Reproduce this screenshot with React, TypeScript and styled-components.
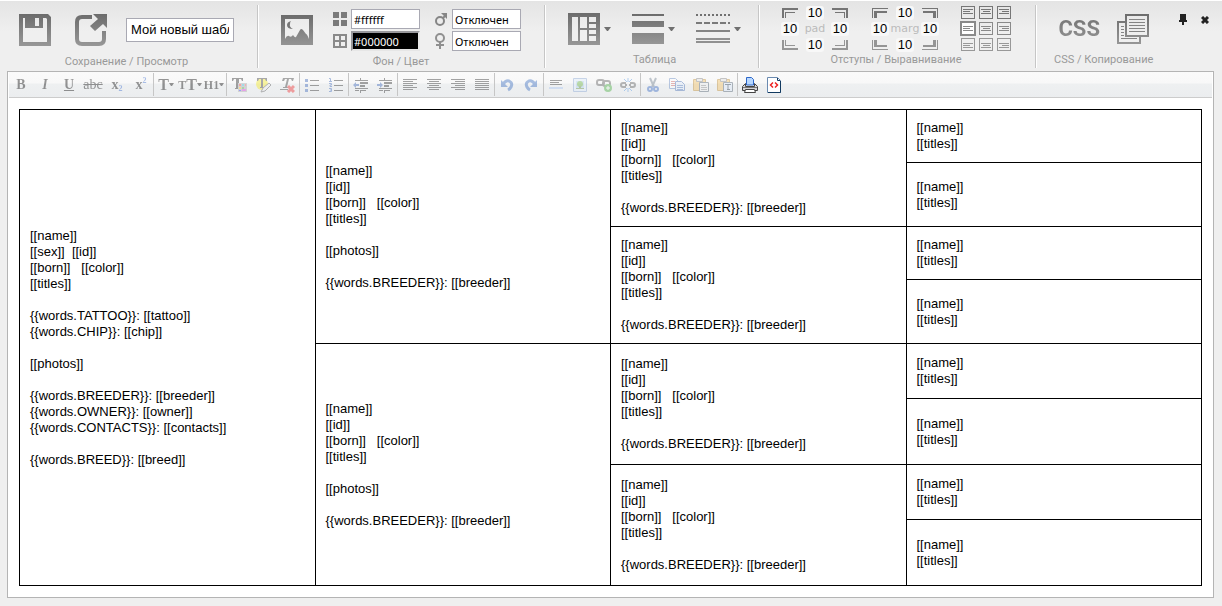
import React from 'react';
import styled, { createGlobalStyle, css } from 'styled-components';

const GlobalStyle = createGlobalStyle`
  * { box-sizing: border-box; }
  body {
    margin: 0;
    background: #efefef;
    font-family: "Liberation Sans", Arial, sans-serif;
    font-size: 13px;
    line-height: 16px;
    color: #000;
  }
  button, input { font: inherit; color: inherit; margin: 0; padding: 0; }
  svg { display: block; flex: none; }
`;

/* ---------- page ---------- */

const Page = styled.main`
  border-top: 1px solid #fff;
  background: linear-gradient(#e4e4e4, #efefef 30px);
  padding: 4px 8px 8px 7px;
`;

const Ribbon = styled.header`
  display: flex;
  align-items: flex-start;
  margin: 0 -8px 3px -7px;
`;

const Group = styled.section<{ $pad: string; $last?: boolean }>`
  display: flex;
  flex-direction: column;
  align-items: center;
  height: 63px;
  padding: ${p => p.$pad};
  ${p =>
    !p.$last &&
    css`
      border-right: 1px solid #c6c6c6;
      box-shadow: 1px 0 #fff;
      margin-right: 1px;
    `}
`;

const Controls = styled.div<{ $gap: number }>`
  display: flex;
  align-items: center;
  gap: ${p => p.$gap}px;
  height: 49px;
`;

const Caption = styled.div`
  font-family: Roboto, "Noto Sans", sans-serif;
  font-size: 11px;
  line-height: 16px;
  color: #999;
  white-space: nowrap;
`;

const IconButton = styled.button`
  display: flex;
  align-items: center;
  gap: 4px;
  border: 0;
  background: none;
  cursor: pointer;
`;

const NameInput = styled.input`
  width: 108px;
  height: 24px;
  padding: 0 4px;
  border: 1px solid #a9a9b3;
  background: #fff;
`;

const Stack = styled.div`
  display: flex;
  flex-direction: column;
  gap: 2px;
  padding-top: 1px;
`;

const Field = styled.label`
  display: grid;
  grid-template-columns: 14px 69px;
  column-gap: 4px;
  align-items: center;
  height: 20px;
`;

const FieldInput = styled.input<{ $dark?: boolean }>`
  width: 69px;
  height: 20px;
  padding: 0 2px;
  border: 1px solid #a9a9b3;
  background: #fff;
  font-family: "Noto Sans", "DejaVu Sans", sans-serif;
  font-size: 11px;
  ${p =>
    p.$dark &&
    css`
      padding: 0 1px;
      border: 2px solid;
      border-color: #98989c #e6e6e6 #e6e6e6 #98989c;
      background: #000;
      color: #fff;
    `}
`;

const BoxGrid = styled.div`
  display: grid;
  grid-template-columns: 18px 32px 18px;
  grid-auto-rows: 14px;
  row-gap: 2px;
  align-items: center;
  justify-items: center;
`;

const BoxInput = styled.input`
  width: 18px;
  height: 14px;
  border: 0;
  border-radius: 3px;
  background: #f8f8f8;
  text-align: center;
`;

const BoxName = styled.span`
  font-family: "DejaVu Sans", sans-serif;
  font-size: 11px;
  line-height: 14px;
  color: #bbb;
`;

const AlignGrid = styled.div`
  display: grid;
  grid-template-columns: repeat(3, 14px);
  grid-auto-rows: 13px;
  gap: 3px 4px;
`;

const AlignButton = styled.button<{ $tone: string; $active?: boolean }>`
  display: grid;
  place-items: center;
  border: 1px solid ${p => p.$tone};
  background: ${p => (p.$active ? '#fff' : 'transparent')};
  box-shadow: ${p => (p.$active ? `0 0 0 1px ${p.$tone}` : 'none')};
  color: ${p => p.$tone};
`;

const CssButton = styled.button`
  border: 0;
  background: linear-gradient(#6e6e6e, #999);
  background-clip: text;
  color: transparent;
  font-family: Roboto, "Liberation Sans", sans-serif;
  font-weight: bold;
  font-size: 22px;
  line-height: 32px;
`;

const WindowTools = styled.div`
  display: flex;
  align-items: center;
  gap: 14px;
  margin: 9px 13px 0 auto;
`;

/* ---------- editor ---------- */

const Editor = styled.section`
  border: 1px solid #b4b4b4;
  background: #fff;
`;

const Toolbar = styled.div`
  display: flex;
  height: 26px;
  padding: 1px 0 2px;
  background: linear-gradient(#fafafa, #f8f8f8 11px, #eef0f1 12px, #ebedef);
  border: solid #fff;
  border-width: 0 1px;
  box-shadow: inset 0 -1px #ccc;
`;

const ToolGroup = styled.div`
  display: flex;
  &:not(:last-child) { border-right: 1px solid #c6c6c6; }
`;

const Tool = styled.button<{ $on?: boolean }>`
  display: flex;
  align-items: center;
  justify-content: center;
  width: 24px;
  border: 0;
  background: none;
  opacity: ${p => (p.$on ? 1 : 0.4)};
`;

type GlyphKind = 'b' | 'i' | 'u' | 's' | 'small' | 'large';

const Glyph = styled.span<{ $kind: GlyphKind }>`
  display: flex;
  align-items: baseline;
  font-family: "Liberation Serif", serif;
  font-size: ${p => (p.$kind === 'large' ? 16 : p.$kind === 'small' ? 12 : 14)}px;
  line-height: 16px;
  color: #000;
  font-weight: ${p => (p.$kind === 's' ? 'normal' : 'bold')};
  font-style: ${p => (p.$kind === 'i' ? 'italic' : 'normal')};
  text-decoration: ${p => (p.$kind === 'u' ? 'underline' : p.$kind === 's' ? 'line-through' : 'none')};
`;

const Script = styled.span<{ $up?: boolean }>`
  align-self: ${p => (p.$up ? 'flex-start' : 'flex-end')};
  font-size: 8px;
  line-height: 8px;
  color: #36c;
`;

const Canvas = styled.div`
  padding: 11px;
`;

const Pedigree = styled.table`
  width: 100%;
  table-layout: fixed;
  border-collapse: collapse;
`;

const Row = styled.tr<{ $h: number }>`
  height: ${p => p.$h}px;
`;

const Cell = styled.td`
  padding: 10px;
  border: 1px solid #000;
  vertical-align: middle;
  white-space: pre-wrap;
`;

/* ---------- ribbon icons ---------- */

const Shade = ({ id, h = 32 }: { id: string; h?: number }) => (
  <defs>
    <linearGradient id={id} gradientUnits="userSpaceOnUse" x1="0" y1="0" x2="0" y2={h}>
      <stop offset="0" stopColor="#6c6c6c" />
      <stop offset="1" stopColor="#979797" />
    </linearGradient>
  </defs>
);

const SaveIcon = () => (
  <svg width="32" height="32">
    <Shade id="gs" />
    <path fill="url(#gs)" fillRule="evenodd" d="M0 0h29l3 3v29H0zM4 4v24h24V5l-1-1h-3v10H6V4zM16 4v8h4V4z" />
  </svg>
);

const OpenIcon = () => (
  <svg width="32" height="32">
    <Shade id="go" />
    <path fill="none" stroke="url(#go)" strokeWidth="4" d="M17 3H7Q2 3 2 8v17q0 5 5 5h17q5 0 5-5v-8" />
    <path fill="url(#go)" d="M18 0h14v14l-4-4-8 7-5-5 8-7z" />
  </svg>
);

const PictureIcon = () => (
  <svg width="32" height="30">
    <Shade id="gp" />
    <path fill="url(#gp)" fillRule="evenodd" d="M0 0h32v30H0zM4 4v20q2-4 4-3 2 2 4-1 2 3 3 2l4-7q1-2 3 0l3 4q1 0 3 5V4z" />
    <path fill="#777" d="M10 6q-4 1-4 4 0 4 6 4-4-2-3-5 0-2 1-3z" />
  </svg>
);

const FillIcon = () => (
  <svg width="14" height="14" fill="#7a7a7a">
    <path d="M0 0h6v6H0zM8 0h6v6H8zM0 8h6v6H0zM8 8h6v6H8z" />
  </svg>
);

const BorderIcon = () => (
  <svg width="14" height="14" fill="#8a8a8a">
    <path fillRule="evenodd" d="M0 0h14v14H0zM2 2v4h4V2zM8 2v4h4V2zM2 8v4h4V8zM8 8v4h4V8z" />
  </svg>
);

const MaleIcon = () => (
  <svg width="14" height="15" fill="none" stroke="#858585" strokeWidth="2">
    <circle cx="6" cy="9" r="4" />
    <path d="M9 6l3-3" />
    <path d="M7 1h6v6z" fill="#858585" stroke="none" />
  </svg>
);

const FemaleIcon = () => (
  <svg width="14" height="16" fill="none" stroke="#909090" strokeWidth="2">
    <circle cx="6" cy="5" r="4" />
    <path d="M6 9v7M2 12h8" />
  </svg>
);

const Caret = () => (
  <svg width="7" height="4">
    <path d="M0 0h7L4 4H3z" fill="#707070" />
  </svg>
);

const LayoutIcon = () => (
  <svg width="32" height="32">
    <Shade id="gl" />
    <path
      fill="url(#gl)"
      fillRule="evenodd"
      d="M0 0h32v32H0zM4 4v24h6V4zM12 4v11h7V4zM12 17v11h7V17zM21 4v5h7V4zM21 11v4h7v-4zM21 17v4h7v-4zM21 23v5h7v-5z"
    />
  </svg>
);

const WidthIcon = () => (
  <svg width="32" height="30">
    <Shade id="gw" h={30} />
    <path fill="url(#gw)" d="M0 0h32v2H0zM0 7h32v6H0zM0 19h32v11H0z" />
  </svg>
);

const StyleIcon = () => (
  <svg width="34" height="30" strokeWidth="2">
    <path d="M0 1h34" stroke="#707070" strokeDasharray="2 2" />
    <path d="M0 9h34" stroke="#7a7a7a" strokeDasharray="6 2" />
    <path d="M0 17h34" stroke="#848484" />
    <path d="M0 25h34M0 28h34" stroke="#909090" />
  </svg>
);

/* corner bracket: one thick and one thin line, mirrored for the other corners */
const Corner = ({ x, y, inner }: { x: number; y: number; inner?: boolean }) => (
  <svg width="16" height="10" fill={y > 0 ? '#757575' : '#959595'}>
    <g transform={`translate(${x > 0 ? 0 : 16} ${y > 0 ? 0 : 10}) scale(${x} ${y})`}>
      {inner ? (
        <path d="M0 0h16v1H1v9H0zM2 3h13v2H5v5H2z" />
      ) : (
        <path d="M0 0h16v2H2v8H0zM3 4h10v1H4v5H3z" />
      )}
    </g>
  </svg>
);

const CopyIcon = () => (
  <svg width="32" height="30" fill="none" strokeWidth="2">
    <Shade id="gc" h={30} />
    <path stroke="url(#gc)" d="M8 8H1v21h22v-6" />
    <path stroke="url(#gc)" d="M9 1h22v21H9z" />
    <path
      stroke="#858585"
      strokeWidth="1"
      d="M12 5.500h16M12 8.500h16M12 11.500h16M12 14.500h16M12 17.500h16M4 12.500h3M4 15.500h3M4 18.500h3M4 21.500h3M4 24.500h16"
    />
  </svg>
);

const PinIcon = () => (
  <svg width="8" height="11" fill="#222">
    <path d="M1 0h6v6h1v2H5v3H3V8H0V6h1z" />
  </svg>
);

const CloseIcon = () => (
  <svg width="8" height="8" stroke="#222" strokeWidth="3">
    <path d="M1 1l6 6M7 1L1 7" />
  </svg>
);

/* ---------- toolbar icons ---------- */

const Svg16 = ({ children }: { children: React.ReactNode }) => (
  <svg width="16" height="16" fill="none">{children}</svg>
);

const SmallCaret = () => (
  <svg width="5" height="3">
    <path d="M0 0h5L3 3H2z" fill="#000" />
  </svg>
);

const CaretGlyph = styled.span`
  display: flex;
  align-items: center;
`;

const Lines = ({ rows }: { rows: [number, number][] }) => (
  <Svg16>
    <path stroke="#222" d={rows.map(([x, w], i) => `M${x} ${2 * i + 2}.5h${w}`).join('')} />
  </Svg16>
);

const BulletIcon = () => (
  <Svg16>
    <path stroke="#222" d="M6 3.500h9M6 8.500h9M6 13.500h9" />
    <path fill="#3562b8" d="M1 2h3v3H1zM1 7h3v3H1zM1 12h3v3H1z" />
  </Svg16>
);

const NumberIcon = () => (
  <Svg16>
    <path stroke="#222" d="M6 3.500h9M6 8.500h9M6 13.500h9" />
    <path stroke="#3562b8" d="M1 1.500h1.500v3M1 4.500h3M1 6.500h2.500v1.500H2v1.500h2M1 11.500h2.500v3H1M2 13h2" />
  </Svg16>
);

const IndentIcon = ({ right }: { right?: boolean }) => (
  <Svg16>
    <path stroke="#222" d="M2 3.500h13M2 11.500h13M8 13.500h5M2 13.500h4M7.500 1v2M7.500 13v3" />
    <path fill="#222" d="M7 5h8v2H7zM7 8h5v2H7z" />
    <path fill="#3562b8" d={right ? 'M6 8L3 5v2H0v2h3v2z' : 'M0 8l3-3v2h3v2H3v2z'} />
  </Svg16>
);

const UndoIcon = ({ redo }: { redo?: boolean }) => (
  <Svg16>
    <g transform={redo ? 'translate(16 0) scale(-1 1)' : undefined}>
      <path d="M4 7q3-4 6-3 4 2 2 6-1 2-3 3" stroke="#2f66bd" strokeWidth="3" />
      <path d="M2 3v7h7z" fill="#2f66bd" />
    </g>
  </Svg16>
);

const ColorIcon = () => (
  <Svg16>
    <path fill="#222" d="M1 1h11v3h-1l-1-2H8v9h1v1H4v-1h1V2H3L2 4H1z" />
    <path fill="#aaa" d="M7 6h9v9H7z" />
    <path fill="#f33" d="M8 7h2v2H8z" />
    <path fill="#3bd" d="M11 7h2v2h-2z" />
    <path fill="#f55" d="M14 7h1v2h-1z" />
    <path fill="#fb0" d="M8 10h2v2H8z" />
    <path fill="#4a4" d="M11 10h2v2h-2z" />
    <path fill="#22f" d="M8 13h2v1H8z" />
    <path fill="#d3d" d="M11 12h4v2h-4z" />
  </Svg16>
);

const MarkerIcon = () => (
  <Svg16>
    <circle cx="7" cy="7" r="6" fill="#f5ea1a" />
    <path fill="#333" d="M2 1h10v3h-1l-1-2H8v8h1v1H5v-1h1V2H4L3 4H2z" />
    <path fill="#eee" stroke="#555" d="M14 6l2 2-6 6-4 1 2-4z" />
  </Svg16>
);

const ClearIcon = () => (
  <Svg16>
    <path fill="#333" d="M4 1h11l-1 3h-1l-1-2h-2L8 10h1v1H4v-1h2l2-8H6L5 4H3zM1 12h8v1H1z" />
    <path stroke="#e22" strokeWidth="3" d="M9 9l6 6M15 9l-6 6" />
  </Svg16>
);

const RuleIcon = () => (
  <Svg16>
    <path stroke="#222" d="M2 3.500h12M2 5.500h9M2 7.500h12" />
    <path fill="#a5c3f2" d="M1 10h14v2H1z" />
  </Svg16>
);

const ImageIcon = () => (
  <Svg16>
    <path fill="#dcebfb" stroke="#7f9fd0" d="M1.500 1.500h13v13h-13z" />
    <path fill="#a9cdf3" d="M4 4h8v8H4z" />
    <circle cx="8" cy="7" r="3" fill="#5fae35" />
    <path fill="#5d8a3a" d="M4 11h8v1H4zM7 9h2v3H7z" />
  </Svg16>
);

const LinkIcon = () => (
  <Svg16>
    <rect x="1" y="3" width="7" height="5" rx="2" stroke="#555" strokeWidth="2" />
    <rect x="7" y="4" width="7" height="5" rx="2" stroke="#555" strokeWidth="2" />
    <circle cx="12" cy="11" r="4" fill="#3faa36" />
    <path stroke="#fff" d="M10 11h4M12 9v4" />
  </Svg16>
);

const UnlinkIcon = () => (
  <Svg16>
    <path stroke="#555" strokeWidth="2" d="M6 6H3Q1 6 1 8t2 2h3M10 6h3q2 0 2 2t-2 2h-3M5 8h2M9 8h2" />
    <path stroke="#4a90e0" d="M8 1v4M4 2l3 3M12 2L9 5M8 15v-4M4 14l3-3M12 14l-3-3" />
  </Svg16>
);

const CutIcon = () => (
  <Svg16>
    <path stroke="#678" strokeWidth="2" d="M5 1l4 9M11 1L7 10" />
    <circle cx="5" cy="12" r="2" stroke="#2a5fc0" strokeWidth="2" />
    <circle cx="11" cy="12" r="2" stroke="#2a5fc0" strokeWidth="2" />
  </Svg16>
);

const PagesIcon = () => (
  <Svg16>
    <path fill="#fff" stroke="#5c82c0" d="M.5 1.500h6l3 3v7h-9z" />
    <path fill="#dce9fb" stroke="#3c66b0" d="M6.500 4.500h6l3 3v6h-9z" />
    <path stroke="#c55" d="M2 4.500h4M2 6.500h4M2 8.500h4" />
    <path stroke="#4674bd" d="M8 8.500h6M8 10.500h6M8 12.500h6" />
  </Svg16>
);

const PasteIcon = ({ plain }: { plain?: boolean }) => (
  <Svg16>
    <path fill="#f2bd58" stroke="#b98220" d="M.5 2.500h12v11H.5z" />
    <path fill="#ddd" stroke="#777" d="M3.500 1.500h6v3h-6z" />
    <path fill={plain ? '#dce9fb' : '#eee'} stroke="#456" d="M6.500 5.500h9v9h-9z" />
    {plain ? (
      <path stroke="#234" d="M8 7.500h6M11 8v5M10 12.500h3" />
    ) : (
      <path stroke="#888" d="M8 8.500h5M8 10.500h6M8 12.500h6" />
    )}
  </Svg16>
);

const PrintIcon = () => (
  <Svg16>
    <path fill="#b8d8ff" stroke="#2c66c8" d="M4.500 8V.5h5l2 2V8z" />
    <path fill="#d4d4d8" stroke="#444" d="M3.500 6.500l-3 3v4h15v-4l-3-3v3h-9z" />
    <path fill="#777" d="M1 10h14v1H1z" />
    <path fill="#fff" stroke="#444" d="M3.500 12.500h9l1 3h-11z" />
  </Svg16>
);

const SourceIcon = () => (
  <Svg16>
    <path fill="#fff" stroke="#6a8ab0" d="M1.500.5h10l3 3v12h-13z" />
    <path stroke="#123a60" d="M14.500 4v11.500H2M11.500 1v2.500H14" />
    <path stroke="#e22" strokeWidth="1.500" d="M7 5.500L4.500 8 7 10.500M9 5.500L11.500 8 9 10.500" />
  </Svg16>
);

/* ---------- data ---------- */

const toolGroups: { name: string; icon: React.ReactNode; on?: boolean }[][] = [
  [
    { name: 'Жирный', icon: <Glyph $kind="b">B</Glyph> },
    { name: 'Курсив', icon: <Glyph $kind="i">I</Glyph> },
    { name: 'Подчеркнутый', icon: <Glyph $kind="u">U</Glyph> },
    { name: 'Зачеркнутый', icon: <Glyph $kind="s">abc</Glyph> },
    { name: 'Нижний индекс', icon: <Glyph $kind="b">x<Script>2</Script></Glyph> },
    { name: 'Верхний индекс', icon: <Glyph $kind="b">x<Script $up>2</Script></Glyph> },
  ],
  [
    { name: 'Шрифт', icon: <CaretGlyph><Glyph $kind="large">T</Glyph><SmallCaret /></CaretGlyph> },
    {
      name: 'Размер',
      icon: <CaretGlyph><Glyph $kind="small">T</Glyph><Glyph $kind="large">T</Glyph><SmallCaret /></CaretGlyph>,
    },
    { name: 'Заголовок', icon: <CaretGlyph><Glyph $kind="small">H1</Glyph><SmallCaret /></CaretGlyph> },
  ],
  [
    { name: 'Цвет текста', icon: <ColorIcon /> },
    { name: 'Цвет фона', icon: <MarkerIcon /> },
    { name: 'Очистить', icon: <ClearIcon /> },
  ],
  [
    { name: 'Список', icon: <BulletIcon /> },
    { name: 'Нумерация', icon: <NumberIcon /> },
  ],
  [
    { name: 'Уменьшить отступ', icon: <IndentIcon /> },
    { name: 'Увеличить отступ', icon: <IndentIcon right /> },
  ],
  [
    { name: 'Влево', icon: <Lines rows={[[1, 14], [1, 10], [1, 14], [1, 10], [1, 14], [1, 10]]} /> },
    { name: 'По центру', icon: <Lines rows={[[1, 14], [3, 10], [1, 14], [3, 10], [1, 14], [3, 10]]} /> },
    { name: 'Вправо', icon: <Lines rows={[[1, 14], [5, 10], [1, 14], [5, 10], [1, 14], [5, 10]]} /> },
    { name: 'По ширине', icon: <Lines rows={[[1, 14], [1, 14], [1, 14], [1, 14], [1, 14], [1, 14]]} /> },
  ],
  [
    { name: 'Отменить', icon: <UndoIcon /> },
    { name: 'Вернуть', icon: <UndoIcon redo /> },
  ],
  [
    { name: 'Линия', icon: <RuleIcon /> },
    { name: 'Изображение', icon: <ImageIcon /> },
    { name: 'Ссылка', icon: <LinkIcon /> },
    { name: 'Убрать ссылку', icon: <UnlinkIcon /> },
  ],
  [
    { name: 'Вырезать', icon: <CutIcon /> },
    { name: 'Копировать', icon: <PagesIcon /> },
    { name: 'Вставить', icon: <PasteIcon /> },
    { name: 'Вставить текст', icon: <PasteIcon plain /> },
  ],
  [
    { name: 'Печать', icon: <PrintIcon />, on: true },
    { name: 'Код', icon: <SourceIcon />, on: true },
  ],
];

const breeder = '{{words.BREEDER}}: [[breeder]]';
const head = '[[name]]\n[[id]]\n[[born]]   [[color]]\n[[titles]]\n\n';
const self =
  '[[name]]\n[[sex]]  [[id]]\n[[born]]   [[color]]\n[[titles]]\n\n' +
  '{{words.TATTOO}}: [[tattoo]]\n{{words.CHIP}}: [[chip]]\n\n[[photos]]\n\n' +
  breeder +
  '\n{{words.OWNER}}: [[owner]]\n{{words.CONTACTS}}: [[contacts]]\n\n{{words.BREED}}: [[breed]]';
const parent = head + '[[photos]]\n\n' + breeder;
const grandparent = head + breeder;
const ancestor = '[[name]]\n[[titles]]';
const rowHeights = [53, 64, 53, 64, 55, 66, 55, 66];

const tones = ['#777', '#8a8a8a', '#989898'];
const alignNames = ['Вверх', 'Середина', 'Вниз'];

const BoxEditor = ({ name, inner }: { name: string; inner?: boolean }) => (
  <BoxGrid>
    <Corner x={1} y={1} inner={inner} />
    <BoxInput aria-label={`${name} top`} defaultValue="10" />
    <Corner x={-1} y={1} inner={inner} />
    <BoxInput aria-label={`${name} left`} defaultValue="10" />
    <BoxName>{name}</BoxName>
    <BoxInput aria-label={`${name} right`} defaultValue="10" />
    <Corner x={1} y={-1} inner={inner} />
    <BoxInput aria-label={`${name} bottom`} defaultValue="10" />
    <Corner x={-1} y={-1} inner={inner} />
  </BoxGrid>
);

const AlignMark = ({ row, col }: { row: number; col: number }) => {
  const short = [0, 2, 3][col];
  const top = [1, 2, 3][row];
  return (
    <svg width="10" height="9" stroke="currentColor">
      <path d={`M0 ${top}.5h10M${short} ${top + 2}.5h7M0 ${top + 4}.5h10`} />
    </svg>
  );
};

export default function App() {
  return (
    <>
      <GlobalStyle />
      <Page>
        <Ribbon>
          <Group $pad="0 23px 0 19px">
            <Controls $gap={19}>
              <Controls $gap={24}>
                <IconButton aria-label="Сохранить"><SaveIcon /></IconButton>
                <IconButton aria-label="Просмотр"><OpenIcon /></IconButton>
              </Controls>
              <NameInput aria-label="Название шаблона" defaultValue="Мой новый шаблон" />
            </Controls>
            <Caption>Сохранение / Просмотр</Caption>
          </Group>
          <Group $pad="0 23px 0 22px">
            <Controls $gap={20}>
              <IconButton aria-label="Фоновое изображение"><PictureIcon /></IconButton>
              <Controls $gap={14}>
                <Stack>
                  <Field><FillIcon /><FieldInput aria-label="Цвет фона" defaultValue="#ffffff" /></Field>
                  <Field><BorderIcon /><FieldInput aria-label="Цвет рамки" $dark defaultValue="#000000" /></Field>
                </Stack>
                <Stack>
                  <Field><MaleIcon /><FieldInput aria-label="Цвет самца" defaultValue="Отключен" /></Field>
                  <Field><FemaleIcon /><FieldInput aria-label="Цвет самки" defaultValue="Отключен" /></Field>
                </Stack>
              </Controls>
            </Controls>
            <Caption>Фон / Цвет</Caption>
          </Group>
          <Group $pad="0 17px 0 22px">
            <Controls $gap={21}>
              <IconButton aria-label="Макет таблицы"><LayoutIcon /><Caret /></IconButton>
              <IconButton aria-label="Толщина линий"><WidthIcon /><Caret /></IconButton>
              <IconButton aria-label="Стиль линий"><StyleIcon /><Caret /></IconButton>
            </Controls>
            <Caption>Таблица</Caption>
          </Group>
          <Group $pad="0 24px 0 21px">
            <Controls $gap={22}>
              <BoxEditor name="pad" />
              <BoxEditor name="marg" inner />
              <AlignGrid>
                {[0, 1, 2].map(r =>
                  [0, 1, 2].map(c => (
                    <AlignButton
                      key={`${r}${c}`}
                      aria-label={`${alignNames[r]} ${c + 1}`}
                      $tone={tones[r]}
                      $active={r === 1 && c === 0}
                    >
                      <AlignMark row={r} col={c} />
                    </AlignButton>
                  )),
                )}
              </AlignGrid>
            </Controls>
            <Caption>Отступы / Выравнивание</Caption>
          </Group>
          <Group $pad="0 22px 0 17px" $last>
            <Controls $gap={17}>
              <CssButton>CSS</CssButton>
              <IconButton aria-label="Копирование"><CopyIcon /></IconButton>
            </Controls>
            <Caption>CSS / Копирование</Caption>
          </Group>
          <WindowTools>
            <IconButton aria-label="Закрепить"><PinIcon /></IconButton>
            <IconButton aria-label="Закрыть"><CloseIcon /></IconButton>
          </WindowTools>
        </Ribbon>
        <Editor>
          <Toolbar role="toolbar">
            {toolGroups.map((group, i) => (
              <ToolGroup key={i}>
                {group.map(tool => (
                  <Tool key={tool.name} aria-label={tool.name} $on={tool.on}>{tool.icon}</Tool>
                ))}
              </ToolGroup>
            ))}
          </Toolbar>
          <Canvas>
            <Pedigree>
              <tbody>
                {rowHeights.map((h, i) => (
                  <Row key={i} $h={h}>
                    {i === 0 && <Cell rowSpan={8}>{self}</Cell>}
                    {i % 4 === 0 && <Cell rowSpan={4}>{parent}</Cell>}
                    {i % 2 === 0 && <Cell rowSpan={2}>{grandparent}</Cell>}
                    <Cell>{ancestor}</Cell>
                  </Row>
                ))}
              </tbody>
            </Pedigree>
          </Canvas>
        </Editor>
      </Page>
    </>
  );
}
